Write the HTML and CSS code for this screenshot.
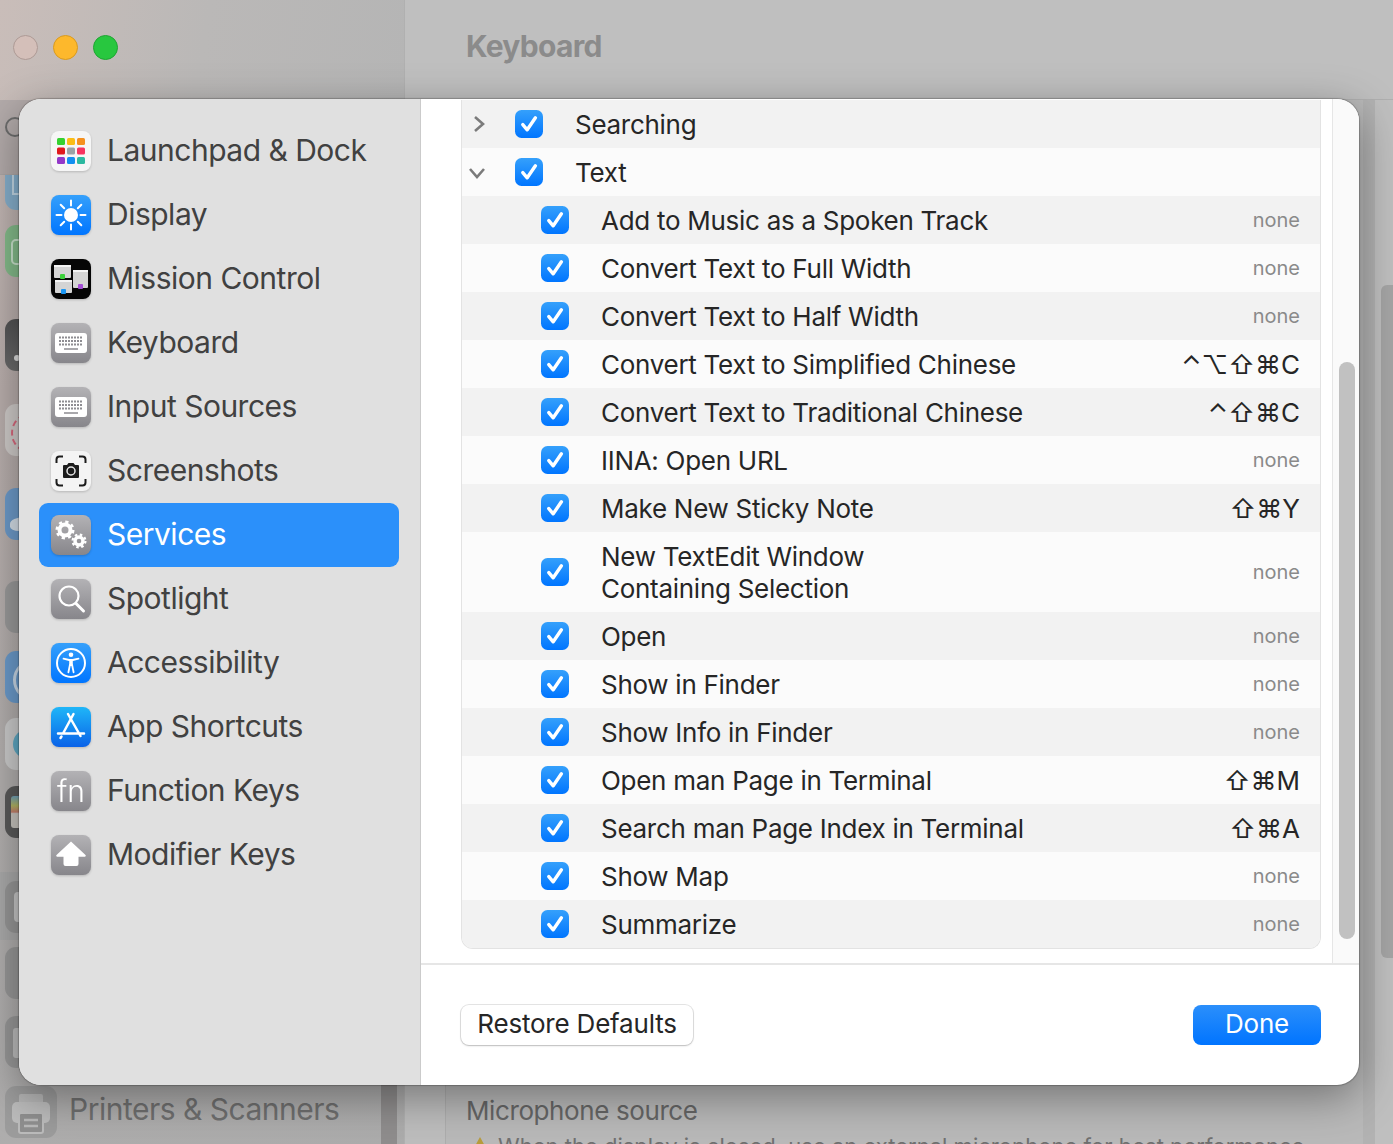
FILE: index.html
```html
<!DOCTYPE html>
<html lang="en">
<head>
<meta charset="utf-8">
<title>Keyboard - Services</title>
<link rel="stylesheet" href="styles.css">
</head>
<body>
<svg class="defs" width="0" height="0" aria-hidden="true">
  <defs>
    <linearGradient id="gBlue" x1="0" y1="0" x2="0" y2="1"><stop offset="0" stop-color="#35a0fb"/><stop offset="1" stop-color="#0075ff"/></linearGradient>
    <linearGradient id="gGray" x1="0" y1="0" x2="0" y2="1"><stop offset="0" stop-color="#b3b2b5"/><stop offset="1" stop-color="#87868b"/></linearGradient>
    <linearGradient id="gStore" x1="0" y1="0" x2="0" y2="1"><stop offset="0" stop-color="#1fb6f8"/><stop offset="1" stop-color="#0a62e8"/></linearGradient>
    <symbol id="check" viewBox="0 0 28 28">
      <rect width="28" height="28" rx="6.5" fill="url(#gBlue)"/>
      <path d="M7.8 14.6l4.4 5.2L20.4 7.8" fill="none" stroke="#fff" stroke-width="3.4" stroke-linecap="round" stroke-linejoin="round"/>
    </symbol>
    <symbol id="keys" viewBox="0 0 40 40">
      <rect width="40" height="40" rx="8" fill="url(#gGray)"/>
      <rect x="4" y="10" width="32" height="20" rx="3" fill="#fff"/>
      <path d="M8 14.5h24M8 18h24M8 21.500h24" stroke="#8e8d92" stroke-width="2" stroke-dasharray="2 1"/>
      <path d="M13 26h14" stroke="#a9a8ac" stroke-width="2"/>
    </symbol>
  </defs>
</svg>

<div class="window">
  <aside class="bg-sidebar">
    <div class="lights">
      <span class="light light-close"></span>
      <span class="light light-min"></span>
      <span class="light light-max"></span>
    </div>
    <div class="bg-search"><span class="bg-search-ring"></span></div>
    <div class="bg-icons">
      <span class="bg-icon bg-i1"></span>
      <span class="bg-icon bg-i2"></span>
      <span class="bg-icon bg-i3"></span>
      <span class="bg-icon bg-i4"></span>
      <span class="bg-icon bg-i5"></span>
      <span class="bg-icon bg-i6"></span>
      <span class="bg-icon bg-i7"></span>
      <span class="bg-icon bg-i8"></span>
      <span class="bg-icon bg-i9"></span>
      <span class="bg-band"><span class="bg-icon bg-i10"></span></span>
      <span class="bg-icon bg-i11"></span>
      <span class="bg-icon bg-i12"></span>
    </div>
    <div class="bg-printers">
      <svg class="bg-printer-icon" viewBox="0 0 52 52" width="52" height="52">
        <rect width="52" height="52" rx="11" fill="#9c9c9c"/>
        <rect x="14" y="8" width="24" height="10" rx="2" fill="#b5b5b5"/>
        <rect x="7" y="16" width="38" height="21" rx="5" fill="#bcbcbc"/>
        <rect x="14" y="27" width="24" height="20" rx="2" fill="#8f8f8f" stroke="#bcbcbc" stroke-width="2"/>
        <path d="M19 34h14M19 40h14" stroke="#b9b9b9" stroke-width="2.500"/>
      </svg>
      <span class="bg-printer-label">Printers &amp; Scanners</span>
    </div>
    <span class="bg-scroll-strip"></span>
  </aside>
  <main class="bg-main">
    <header class="bg-title">Keyboard</header>
    <div class="bg-body">
      <div class="bg-mic">Microphone source</div>
      <div class="bg-warn"><span class="bg-warn-mark"></span>When the display is closed, use an external microphone for best performance.</div>
    </div>
    <span class="bg-scrollbar"></span>
  </main>
</div>

<section class="sheet">
  <nav class="side">
    <a class="side-row">
      <svg class="ico" viewBox="0 0 40 40"><rect width="40" height="40" rx="8" fill="#f6f6f6"/>
        <rect x="6" y="7" width="8" height="7" rx="1.500" fill="#35d130"/><rect x="16" y="7" width="8" height="7" rx="1.500" fill="#fbbd16"/><rect x="26" y="7" width="8" height="7" rx="1.500" fill="#f5901e"/>
        <rect x="6" y="16.500" width="8" height="7" rx="1.500" fill="#e0181c"/><rect x="16" y="16.500" width="8" height="7" rx="1.500" fill="#9aa3a6"/><rect x="26" y="16.500" width="8" height="7" rx="1.500" fill="#f6335f"/>
        <rect x="6" y="26" width="8" height="7" rx="1.500" fill="#9338c9"/><rect x="16" y="26" width="8" height="7" rx="1.500" fill="#128ff0"/><rect x="26" y="26" width="8" height="7" rx="1.500" fill="#2cb9a0"/>
      </svg>
      <span>Launchpad &amp; Dock</span>
    </a>
    <a class="side-row">
      <svg class="ico" viewBox="0 0 40 40"><rect width="40" height="40" rx="8" fill="url(#gBlue)"/>
        <circle cx="20" cy="20" r="7" fill="#fff"/>
        <path d="M20 5.500v5M20 29.500v5M5.500 20h5M29.500 20h5M9.700 9.700l3.500 3.500M26.800 26.800l3.500 3.500M9.700 30.300l3.500-3.500M26.800 13.200l3.500-3.500" stroke="#fff" stroke-width="2" stroke-linecap="round"/>
      </svg>
      <span>Display</span>
    </a>
    <a class="side-row">
      <svg class="ico" viewBox="0 0 40 40"><rect width="40" height="40" rx="8" fill="#060606"/>
        <rect x="3" y="6" width="17" height="13" rx="1" fill="#d4d4d4"/><rect x="3" y="6" width="17" height="2" fill="#f4f4f4"/>
        <rect x="22" y="11" width="15" height="18" rx="1" fill="#d4d4d4"/><rect x="22" y="11" width="15" height="2" fill="#f4f4f4"/>
        <rect x="4" y="21" width="17" height="13" rx="1" fill="#d4d4d4"/><rect x="4" y="21" width="17" height="2" fill="#f4f4f4"/>
        <rect x="9" y="15" width="5" height="5" rx="1" fill="#3dd13c"/><rect x="27" y="25" width="5" height="5" rx="1" fill="#a44fd6"/><rect x="10" y="30" width="5" height="5" rx="1" fill="#1a97f5"/>
      </svg>
      <span>Mission Control</span>
    </a>
    <a class="side-row">
      <svg class="ico" viewBox="0 0 40 40"><use href="#keys"/></svg>
      <span>Keyboard</span>
    </a>
    <a class="side-row">
      <svg class="ico" viewBox="0 0 40 40"><use href="#keys"/></svg>
      <span>Input Sources</span>
    </a>
    <a class="side-row">
      <svg class="ico" viewBox="0 0 40 40"><rect width="40" height="40" rx="8" fill="#f4f4f4"/>
        <path d="M5.500 12V8.500a3 3 0 0 1 3-3H12M28 5.500h3.500a3 3 0 0 1 3 3V12M34.500 28v3.500a3 3 0 0 1-3 3H28M12 34.500H8.500a3 3 0 0 1-3-3V28" fill="none" stroke="#1c1c1c" stroke-width="2"/>
        <path d="M13 14h3l1.500-2h5L24 14h3a1 1 0 0 1 1 1v11a1 1 0 0 1-1 1H13a1 1 0 0 1-1-1V15a1 1 0 0 1 1-1z" fill="#1c1c1c"/>
        <circle cx="20" cy="20" r="4" fill="none" stroke="#e6e6e6" stroke-width="1.500"/>
      </svg>
      <span>Screenshots</span>
    </a>
    <a class="side-row is-active">
      <svg class="ico" viewBox="0 0 40 40"><rect width="40" height="40" rx="8" fill="url(#gGray)"/>
        <circle cx="14" cy="15" r="5.500" fill="none" stroke="#fff" stroke-width="4"/>
        <circle cx="14" cy="15" r="8.200" fill="none" stroke="#fff" stroke-width="2.600" stroke-dasharray="3.200 3.240"/>
        <circle cx="28" cy="26" r="4" fill="none" stroke="#fff" stroke-width="3.400"/>
        <circle cx="28" cy="26" r="6.400" fill="none" stroke="#fff" stroke-width="2.200" stroke-dasharray="2.500 2.530"/>
      </svg>
      <span>Services</span>
    </a>
    <a class="side-row">
      <svg class="ico" viewBox="0 0 40 40"><rect width="40" height="40" rx="8" fill="url(#gGray)"/>
        <circle cx="18" cy="17" r="9.500" fill="none" stroke="#fff" stroke-width="2.200"/>
        <path d="M25 24.500l7.500 7.500" stroke="#fff" stroke-width="3" stroke-linecap="round"/>
      </svg>
      <span>Spotlight</span>
    </a>
    <a class="side-row">
      <svg class="ico" viewBox="0 0 40 40"><rect width="40" height="40" rx="8" fill="url(#gBlue)"/>
        <circle cx="20" cy="20" r="14" fill="none" stroke="#fff" stroke-width="2"/>
        <circle cx="20" cy="11.800" r="2.300" fill="#fff"/>
        <path d="M12.500 15.700l5.700 1.300h3.600l5.700-1.300" fill="none" stroke="#fff" stroke-width="1.800" stroke-linecap="round" stroke-linejoin="round"/>
        <rect x="18.200" y="16.500" width="3.600" height="6.500" fill="#fff"/>
        <path d="M18.900 22l-1.500 7.300M21.100 22l1.500 7.300" fill="none" stroke="#fff" stroke-width="1.800" stroke-linecap="round"/>
      </svg>
      <span>Accessibility</span>
    </a>
    <a class="side-row">
      <svg class="ico" viewBox="0 0 40 40"><rect width="40" height="40" rx="8" fill="url(#gStore)"/>
        <path d="M22.500 7L12 26.500M17 7l12.500 22M7 26.500h26M10.500 29.500l-1 1.500" fill="none" stroke="#fff" stroke-width="2.500" stroke-linecap="round"/>
      </svg>
      <span>App Shortcuts</span>
    </a>
    <a class="side-row">
      <span class="ico ico-fn">fn</span>
      <span>Function Keys</span>
    </a>
    <a class="side-row">
      <svg class="ico" viewBox="0 0 40 40"><rect width="40" height="40" rx="8" fill="url(#gGray)"/>
        <path d="M20 6.500L34.500 20a1 1 0 0 1-.7 1.700H27.500V29a2 2 0 0 1-2 2h-11a2 2 0 0 1-2-2v-7.300H6.200a1 1 0 0 1-.7-1.700z" fill="#fff"/>
      </svg>
      <span>Modifier Keys</span>
    </a>
  </nav>

  <div class="pane">
    <div class="scroll">
      <div class="list-wrap">
        <div class="list">
          <div class="row row-top alt">
            <svg class="chev" viewBox="0 0 14 18" width="14" height="18"><path d="M3 2l8 7-8 7" fill="none" stroke="#7b7b7b" stroke-width="2.600"/></svg>
            <svg class="cb"><use href="#check"/></svg>
            <span class="name">Searching</span>
          </div>
          <div class="row row-top">
            <svg class="chev chev-open" viewBox="0 0 18 14" width="18" height="14"><path d="M2 3l7 8 7-8" fill="none" stroke="#7b7b7b" stroke-width="2.600"/></svg>
            <svg class="cb"><use href="#check"/></svg>
            <span class="name">Text</span>
          </div>
          <div class="row alt"><svg class="cb"><use href="#check"/></svg><span class="name">Add to Music as a Spoken Track</span><span class="none">none</span></div>
          <div class="row"><svg class="cb"><use href="#check"/></svg><span class="name">Convert Text to Full Width</span><span class="none">none</span></div>
          <div class="row alt"><svg class="cb"><use href="#check"/></svg><span class="name">Convert Text to Half Width</span><span class="none">none</span></div>
          <div class="row"><svg class="cb"><use href="#check"/></svg><span class="name">Convert Text to Simplified Chinese</span><span class="keys">⌃⌥⇧⌘C</span></div>
          <div class="row alt"><svg class="cb"><use href="#check"/></svg><span class="name">Convert Text to Traditional Chinese</span><span class="keys">⌃⇧⌘C</span></div>
          <div class="row"><svg class="cb"><use href="#check"/></svg><span class="name">IINA: Open URL</span><span class="none">none</span></div>
          <div class="row alt"><svg class="cb"><use href="#check"/></svg><span class="name">Make New Sticky Note</span><span class="keys">⇧⌘Y</span></div>
          <div class="row row-tall"><svg class="cb"><use href="#check"/></svg><span class="name">New TextEdit Window<br>Containing Selection</span><span class="none">none</span></div>
          <div class="row alt"><svg class="cb"><use href="#check"/></svg><span class="name">Open</span><span class="none">none</span></div>
          <div class="row"><svg class="cb"><use href="#check"/></svg><span class="name">Show in Finder</span><span class="none">none</span></div>
          <div class="row alt"><svg class="cb"><use href="#check"/></svg><span class="name">Show Info in Finder</span><span class="none">none</span></div>
          <div class="row"><svg class="cb"><use href="#check"/></svg><span class="name">Open man Page in Terminal</span><span class="keys">⇧⌘M</span></div>
          <div class="row alt"><svg class="cb"><use href="#check"/></svg><span class="name">Search man Page Index in Terminal</span><span class="keys">⇧⌘A</span></div>
          <div class="row"><svg class="cb"><use href="#check"/></svg><span class="name">Show Map</span><span class="none">none</span></div>
          <div class="row alt"><svg class="cb"><use href="#check"/></svg><span class="name">Summarize</span><span class="none">none</span></div>
        </div>
      </div>
      <div class="track"><span class="thumb"></span></div>
    </div>
    <footer class="foot">
      <button class="btn btn-plain">Restore Defaults</button>
      <button class="btn btn-done">Done</button>
    </footer>
  </div>
</section>
</body>
</html>
```

FILE: styles.css
```css
* { box-sizing: border-box; }
html, body { margin: 0; padding: 0; }
body {
  width: 1393px;
  height: 1144px;
  overflow: hidden;
  position: relative;
  font-family: Inter, "Liberation Sans", sans-serif;
  background: #bdbdbd;
}
.defs { position: absolute; }

/* dimmed window behind the sheet */
.window {
  display: grid;
  grid-template-columns: 405px 1fr;
  height: 1144px;
}
.bg-sidebar {
  position: relative;
  display: flex;
  flex-direction: column;
  background: linear-gradient(160deg, #c8bcb8 0, #b9aeac 30%, #b2afae 60%, #acacac 100%);
  border-right: 1px solid #b0b0b0;
}
.lights { display: flex; gap: 15px; padding: 35px 0 0 13px; height: 100px; background: linear-gradient(100deg, #c9bdb9 0, #bab8b7 50%, #b5b5b5 100%); }
.light { width: 25px; height: 25px; border-radius: 50%; border: 1px solid; }
.light-close { background: #d4bfb9; border-color: #ad9a95; }
.light-min { background: #fdb82c; border-color: #d89a20; }
.light-max { background: #28c73f; border-color: #1fa532; }
.bg-search {
  height: 75px;
  padding: 17px 0 0 5px;
  background: #b3abaa;
  border-bottom: 1px solid #aca6a5;
}
.bg-search-ring { display: block; width: 20px; height: 20px; border: 2px solid #6d6d6d; border-radius: 50%; }
.bg-icons { display: flex; flex-direction: column; align-items: flex-start; padding-left: 5px; }
.bg-icon { position: relative; display: block; flex: none; width: 52px; height: 52px; border-radius: 11px; overflow: hidden; }
.bg-icon::after { content: ""; position: absolute; }
.bg-i1 { background: #86afcc; height: 35px; border-radius: 0 0 11px 11px; margin-bottom: 15px; }
.bg-i1::after { left: 7px; top: -6px; width: 30px; height: 22px; border: 2px solid #c3d8e6; }
.bg-i2 { background: #84bb8a; margin-bottom: 42px; }
.bg-i2::after { left: 6px; top: 14px; width: 30px; height: 22px; border: 2px solid #c9e2cc; border-radius: 5px; }
.bg-i3 { background: linear-gradient(#525253, #6c6c6c); margin-bottom: 33px; }
.bg-i3::after { left: 9px; top: 36px; width: 6px; height: 6px; border-radius: 50%; background: #ddd; }
.bg-i4 { background: #cfcbc9; margin-bottom: 32px; }
.bg-i4::after { left: 6px; top: 10px; width: 30px; height: 34px; border: 2px dashed #d86a7e; border-radius: 50%; }
.bg-i5 { background: #6d9bca; margin-bottom: 41px; }
.bg-i5::after { left: 5px; top: 29px; width: 30px; height: 14px; border-radius: 50% 50% 30% 30%; background: #d5dfe8; }
.bg-i6 { background: #9a9a9a; margin-bottom: 18px; }
.bg-i7 { background: #6b9bcb; margin-bottom: 15px; }
.bg-i7::after { left: 8px; top: 8px; width: 36px; height: 36px; border: 3px solid #c9d8e6; border-radius: 50%; }
.bg-i8 { background: #cbcbcb; margin-bottom: 16px; }
.bg-i8::after { left: 8px; top: 11px; width: 30px; height: 30px; border-radius: 50%; background: #5fa9c4; }
.bg-i9 { background: #5a5a5a; }
.bg-i9::after { left: 6px; top: 10px; width: 34px; height: 32px; border-radius: 3px; background: linear-gradient(#6fa0b8 0, #b3b563 30%, #c57f6c 50%, #c8c5bf 55%); }
.bg-band { display: block; width: 400px; margin: 34px 0 7px -5px; padding: 9px 0 7px 5px; background: #a9a9a9; }
.bg-i10 { background: #969696; }
.bg-i10::after { left: 9px; top: 11px; width: 20px; height: 30px; border-radius: 4px; background: #c6c6c6; }
.bg-i11 { background: #979797; margin-bottom: 17px; }
.bg-i12 { background: #979797; }
.bg-i12::after { left: 8px; top: 12px; width: 18px; height: 30px; border-radius: 3px; background: #bdbdbd; }
.bg-printers {
  display: flex;
  align-items: center;
  gap: 12px;
  padding-left: 5px;
  margin-top: 18px;
  font-size: 30px;
  letter-spacing: -0.5px;
  color: #6f6f6f;
}
.bg-printer-label { white-space: nowrap; margin-top: -6px; }
.bg-scroll-strip {
  position: absolute;
  left: 381px;
  top: 1000px;
  bottom: 0;
  width: 16px;
  background: #8f8d8d;
}
.bg-main { position: relative; display: flex; flex-direction: column; background: #bdbdbd; }
.bg-title {
  height: 100px;
  padding: 28px 0 0 61px;
  font-size: 30px;
  line-height: 36px;
  font-weight: 700;
  letter-spacing: -0.7px;
  color: #8b8b8b;
  background: #bfbfbf;
  border-bottom: 1px solid #afafaf;
}
.bg-body {
  flex: 1;
  padding: 995px 0 0 20px;
  margin-left: 40px;
  border-left: 1px solid #adadad;
  background: linear-gradient(to right, #b9b9b9 calc(100% - 30px), #b2b2b2 calc(100% - 30px), #b2b2b2 calc(100% - 18px), #bfbfbf calc(100% - 18px));
}
.bg-mic { font-size: 26px; line-height: 32px; letter-spacing: -0.4px; color: #666; white-space: nowrap; }
.bg-warn { display: flex; align-items: center; gap: 8px; margin-top: 5px; font-size: 22px; line-height: 28px; color: #707070; white-space: nowrap; }
.bg-warn-mark { width: 0; height: 0; margin-left: 4px; border-left: 10px solid transparent; border-right: 10px solid transparent; border-bottom: 18px solid #b89c3c; }
.bg-scrollbar {
  position: absolute;
  right: 0;
  top: 285px;
  width: 12px;
  height: 673px;
  border-radius: 6px 0 0 6px;
  background: #a5a5a5;
}

/* sheet */
.sheet {
  position: absolute;
  left: 19px;
  top: 99px;
  width: 1340px;
  height: 986px;
  display: grid;
  grid-template-columns: 402px 1fr;
  border-radius: 22px;
  overflow: hidden;
  background: #fff;
  box-shadow: 0 0 1px 1px rgba(0,0,0,.22), 0 12px 44px rgba(0,0,0,.38);
}
.side {
  background: #e0e0e0;
  border-right: 1px solid #cbcbcb;
  padding: 20px 21px 0 20px;
  display: flex;
  flex-direction: column;
}
.side-row {
  display: flex;
  align-items: center;
  height: 64px;
  padding-left: 12px;
  gap: 16px;
  border-radius: 9px;
  font-size: 30px;
  line-height: 62px;
  letter-spacing: -0.5px;
  color: #414141;
  white-space: nowrap;
}
.side-row span:not(.ico) { margin-top: -2px; }
.side-row.is-active { background: #2b90fa; color: #fff; }
.ico { display: block; width: 40px; height: 40px; flex: none; filter: drop-shadow(0 1px 1px rgba(0,0,0,.18)); }
.ico-fn {
  display: flex; align-items: center; justify-content: center;
  border-radius: 8px;
  background: linear-gradient(#b3b2b5, #87868b);
  color: #fff;
  font-size: 30px;
  font-weight: 300;
  line-height: 40px;
  letter-spacing: 0;
}

.pane { display: flex; flex-direction: column; min-width: 0; }
.scroll { display: flex; height: 864px; }
.list-wrap { width: 911px; padding-left: 40px; padding-top: 1px; flex: none; }
.list {
  width: 860px;
  border: 1px solid #e3e3e3;
  border-top: 0;
  border-radius: 0 0 12px 12px;
  overflow: hidden;
  background: #fbfbfb;
  color: #262626;
}
.row {
  display: flex;
  align-items: center;
  height: 48px;
  padding: 0 20px 0 79px;
  font-size: 26px;
  line-height: 32px;
  letter-spacing: -0.28px;
}
.row-top { position: relative; padding-left: 53px; }
.row-tall { height: 80px; }
.alt { background: #f2f2f2; }
.cb { width: 28px; height: 28px; flex: none; margin-right: 32px; }
.name { flex: 1; white-space: nowrap; padding-top: 2px; }
.none { font-size: 20px; color: #8a8a8a; letter-spacing: 0; }
.keys { font-family: Inter, "Noto Sans CJK JP", "DejaVu Sans", sans-serif; font-size: 26px; letter-spacing: 0; color: #262626; padding-top: 2px; }
.chev { position: absolute; left: 10px; top: 15px; }
.chev-open { left: 6px; top: 18px; }
.track {
  flex: 1;
  padding: 263px 0 0 6px;
  background: #fafafa;
  border-left: 1px solid #e6e6e6;
}
.thumb { display: block; width: 16px; height: 577px; border-radius: 8px; background: #c1c1c1; }
.foot {
  flex: 1;
  display: flex;
  justify-content: space-between;
  align-items: flex-start;
  padding: 40px 38px 0 40px;
  border-top: 2px solid #e6e6e6;
}
.btn {
  height: 40px;
  border: 0;
  border-radius: 8px;
  font-family: inherit;
  font-size: 26px;
  line-height: 36px;
  letter-spacing: -0.2px;
  padding: 0 0 3px;
}
.btn-plain { width: 232px; background: #fff; color: #262626; box-shadow: 0 0 0 1px rgba(0,0,0,.1), 0 1px 2px rgba(0,0,0,.18); }
.btn-done { width: 128px; background: linear-gradient(#2b8ffb, #0074ff); color: #fff; }
```
